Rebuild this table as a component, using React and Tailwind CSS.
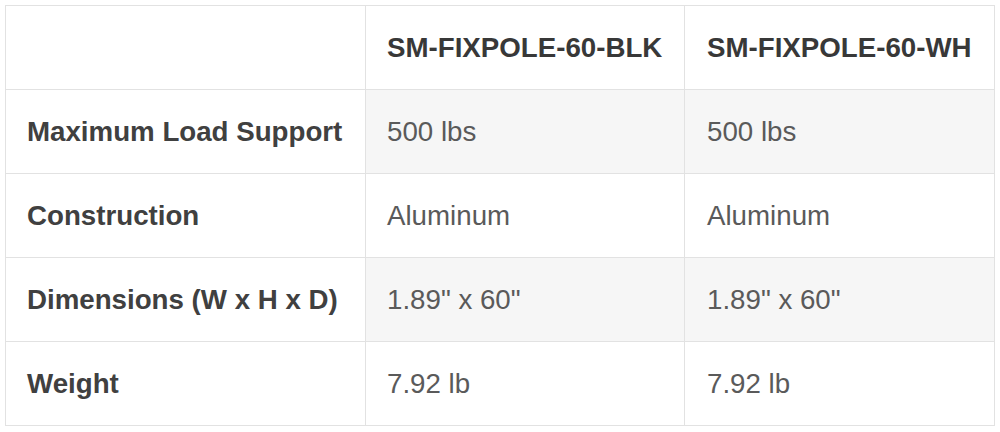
import React from 'react';

const rows = [
  { label: 'Maximum Load Support', values: ['500 lbs', '500 lbs'], shaded: true },
  { label: 'Construction', values: ['Aluminum', 'Aluminum'], shaded: false },
  { label: 'Dimensions (W x H x D)', values: ['1.89" x 60"', '1.89" x 60"'], shaded: true },
  { label: 'Weight', values: ['7.92 lb', '7.92 lb'], shaded: false },
];

const SpecTable = () => {
  return (
    <div className="bg-white w-[1000px] h-[432px] pt-[5px] pl-[5px]">
      <table
        className="border-collapse table-fixed w-[989px] text-[27.7px] leading-none"
        style={{ fontFamily: '"Liberation Sans", Arial, sans-serif' }}
      >
        <colgroup>
          <col className="w-[360px]" />
          <col className="w-[319px]" />
          <col className="w-[310px]" />
        </colgroup>
        <thead>
          <tr className="h-[84px]">
            <th className="border border-[#e2e2e2] bg-white" />
            <th className="border border-[#e2e2e2] bg-white text-left font-bold text-[#383838] pl-[21px]">
              SM-FIXPOLE-60-BLK
            </th>
            <th className="border border-[#e2e2e2] bg-white text-left font-bold text-[#383838] pl-[22px]">
              SM-FIXPOLE-60-WH
            </th>
          </tr>
        </thead>
        <tbody>
          {rows.map((row) => (
            <tr key={row.label} className="h-[84px]">
              <th className="border border-[#e2e2e2] bg-white text-left font-bold text-[#404040] pl-[21px]">
                {row.label}
              </th>
              {row.values.map((v, i) => (
                <td
                  key={i}
                  className={
                    row.shaded
                      ? 'border border-[#e2e2e2] bg-[#f6f6f6] text-[#5a5a5a] ' + (i === 0 ? 'pl-[21px]' : 'pl-[22px]')
                      : 'border border-[#e2e2e2] bg-white text-[#5a5a5a] ' + (i === 0 ? 'pl-[21px]' : 'pl-[22px]')
                  }
                >
                  {v}
                </td>
              ))}
            </tr>
          ))}
        </tbody>
      </table>
    </div>
  );
};

export default function App() {
  return <SpecTable />;
}
